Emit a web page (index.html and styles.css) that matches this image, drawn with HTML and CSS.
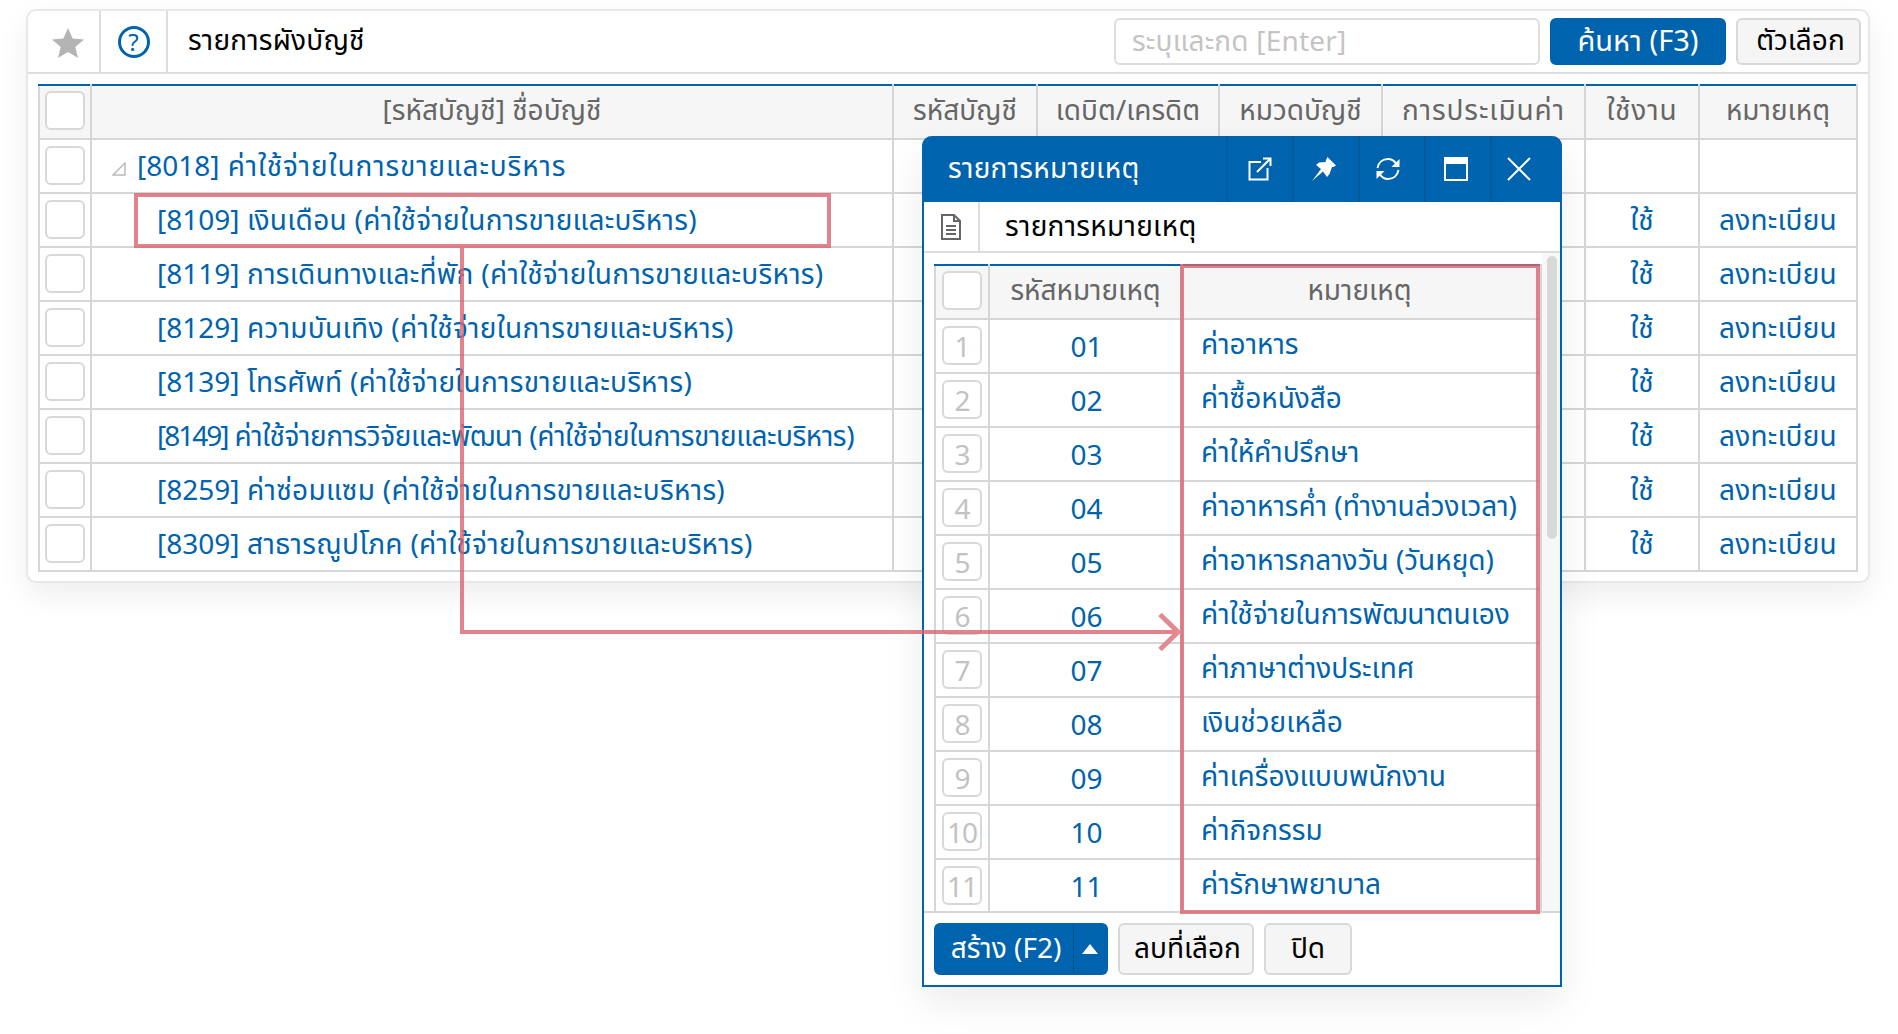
FILE: index.html
```html
<!DOCTYPE html>
<html lang="th">
<head>
<meta charset="utf-8">
<title>รายการผังบัญชี</title>
<link rel="stylesheet" href="styles.css">
</head>
<body>
<main class="panel">
  <header class="bar">
    <div class="bar-cell star-cell">
      <svg class="star" viewBox="0 0 32 30"><path d="M16 0l4.600 10.600L32 11.500l-8.700 7.500L26 30l-10-5.900L6 30l2.700-11L0 11.500l11.400-.9z"/></svg>
    </div>
    <div class="bar-cell help-cell"><span class="help">?</span></div>
    <h1 class="bar-title">รายการผังบัญชี</h1>
    <div class="search-box">ระบุและกด [Enter]</div>
    <button class="btn primary search-btn">ค้นหา (F3)</button>
    <button class="btn option-btn">ตัวเลือก</button>
  </header>
  <table class="grid main-grid">
    <colgroup><col class="c0"><col class="c1"><col class="c2"><col class="c3"><col class="c4"><col class="c5"><col class="c6"><col class="c7"></colgroup>
    <thead>
      <tr><th><span class="check"></span></th><th>[รหัสบัญชี] ชื่อบัญชี</th><th>รหัสบัญชี</th><th>เดบิต/เครดิต</th><th>หมวดบัญชี</th><th class="wide">การประเมินค่า</th><th class="wide">ใช้งาน</th><th>หมายเหตุ</th></tr>
    </thead>
    <tbody>
      <tr><td><span class="check"></span></td><td class="name parent"><svg class="tree" viewBox="0 0 14 14"><path d="M13 1v12H1z" fill="none" stroke="#bbb" stroke-width="1.500"/></svg><span class="id">[8018]</span> ค่าใช้จ่ายในการขายและบริหาร</td><td></td><td></td><td></td><td></td><td></td><td></td></tr>
      <tr><td><span class="check"></span></td><td class="name child"><span class="id">[8109]</span> เงินเดือน (ค่าใช้จ่ายในการขายและบริหาร)</td><td></td><td></td><td></td><td></td><td class="mid">ใช้</td><td class="mid">ลงทะเบียน</td></tr>
      <tr><td><span class="check"></span></td><td class="name child"><span class="id">[8119]</span> การเดินทางและที่พัก (ค่าใช้จ่ายในการขายและบริหาร)</td><td></td><td></td><td></td><td></td><td class="mid">ใช้</td><td class="mid">ลงทะเบียน</td></tr>
      <tr><td><span class="check"></span></td><td class="name child"><span class="id">[8129]</span> ความบันเทิง (ค่าใช้จ่ายในการขายและบริหาร)</td><td></td><td></td><td></td><td></td><td class="mid">ใช้</td><td class="mid">ลงทะเบียน</td></tr>
      <tr><td><span class="check"></span></td><td class="name child"><span class="id">[8139]</span> โทรศัพท์ (ค่าใช้จ่ายในการขายและบริหาร)</td><td></td><td></td><td></td><td></td><td class="mid">ใช้</td><td class="mid">ลงทะเบียน</td></tr>
      <tr><td><span class="check"></span></td><td class="name child tight"><span class="id">[8149]</span> ค่าใช้จ่ายการวิจัยและพัฒนา (ค่าใช้จ่ายในการขายและบริหาร)</td><td></td><td></td><td></td><td></td><td class="mid">ใช้</td><td class="mid">ลงทะเบียน</td></tr>
      <tr><td><span class="check"></span></td><td class="name child"><span class="id">[8259]</span> ค่าซ่อมแซม (ค่าใช้จ่ายในการขายและบริหาร)</td><td></td><td></td><td></td><td></td><td class="mid">ใช้</td><td class="mid">ลงทะเบียน</td></tr>
      <tr><td><span class="check"></span></td><td class="name child"><span class="id">[8309]</span> สาธารณูปโภค (ค่าใช้จ่ายในการขายและบริหาร)</td><td></td><td></td><td></td><td></td><td class="mid">ใช้</td><td class="mid">ลงทะเบียน</td></tr>
    </tbody>
  </table>
</main>

<section class="modal">
  <header class="modal-head">
    <h2 class="modal-title">รายการหมายเหตุ</h2>
    <div class="tool"><svg viewBox="0 0 24 24"><path d="M13 5H1.500v17.500h18V11M9 15L22.500 1.500M15 1.500h7.500V9"/></svg></div>
    <div class="tool tool-pin"><svg viewBox="0 0 24 24"><path class="fill" d="M15.500 0L24 8.500 21.500 10H20l-2.500 7L15 20l-4-5.500L0 24l9-12-5-4 3-2.500L13.500 5l.5-2z"/></svg></div>
    <div class="tool tool-sync"><svg viewBox="0 0 24 24"><path d="M1.500 11C2.500 5.500 6.500 2 12 2c3.500 0 6 1.500 8 4.500M22.500 13c-1 5.500-5 9-10.500 9-3.500 0-6-1.500-8-4.500"/><path class="fill" d="M23.500 2v8h-8zM.5 22v-8h8z"/></svg></div>
    <div class="tool tool-max"><svg viewBox="0 0 24 24"><path d="M1 1h22v22H1z"/><path class="fill" d="M1 1h22v6H1z"/></svg></div>
    <div class="tool tool-last"><svg viewBox="0 0 24 24"><path d="M1 1l22 22M23 1L1 23"/></svg></div>
  </header>
  <div class="modal-sub">
    <div class="doc-cell"><svg class="doc" viewBox="0 0 20 26"><path d="M1 1h12l6 6v18H1z M13 1v6h6 M5 12h10M5 16h10M5 20h10" fill="none" stroke="#666" stroke-width="2"/></svg></div>
    <h3 class="sub-title">รายการหมายเหตุ</h3>
  </div>
  <div class="modal-body">
    <table class="grid note-grid">
      <colgroup><col class="n0"><col class="n1"><col class="n2"></colgroup>
      <thead><tr><th><span class="check"></span></th><th>รหัสหมายเหตุ</th><th class="note-head">หมายเหตุ</th></tr></thead>
      <tbody>
        <tr><td><span class="check">1</span></td><td class="code">01</td><td class="note">ค่าอาหาร</td></tr>
        <tr><td><span class="check">2</span></td><td class="code">02</td><td class="note">ค่าซื้อหนังสือ</td></tr>
        <tr><td><span class="check">3</span></td><td class="code">03</td><td class="note">ค่าให้คำปรึกษา</td></tr>
        <tr><td><span class="check">4</span></td><td class="code">04</td><td class="note">ค่าอาหารค่ำ (ทำงานล่วงเวลา)</td></tr>
        <tr><td><span class="check">5</span></td><td class="code">05</td><td class="note">ค่าอาหารกลางวัน (วันหยุด)</td></tr>
        <tr><td><span class="check">6</span></td><td class="code">06</td><td class="note">ค่าใช้จ่ายในการพัฒนาตนเอง</td></tr>
        <tr><td><span class="check">7</span></td><td class="code">07</td><td class="note">ค่าภาษาต่างประเทศ</td></tr>
        <tr><td><span class="check">8</span></td><td class="code">08</td><td class="note">เงินช่วยเหลือ</td></tr>
        <tr><td><span class="check">9</span></td><td class="code">09</td><td class="note">ค่าเครื่องแบบพนักงาน</td></tr>
        <tr><td><span class="check">10</span></td><td class="code">10</td><td class="note">ค่ากิจกรรม</td></tr>
        <tr><td><span class="check">11</span></td><td class="code">11</td><td class="note">ค่ารักษาพยาบาล</td></tr>
      </tbody>
    </table>
    <div class="scroll"><div class="thumb"></div></div>
  </div>
  <footer class="modal-foot">
    <div class="split"><button class="btn primary split-main">สร้าง (F2)</button><button class="btn primary split-caret"><span class="caret"></span></button></div>
    <button class="btn del-btn">ลบที่เลือก</button>
    <button class="btn close-btn">ปิด</button>
  </footer>
</section>

<div class="mark mark-row"></div>
<div class="mark mark-col"></div>
<div class="mark mark-v"></div>
<div class="mark mark-h"></div>
<svg class="arrow" viewBox="0 0 24 40"><path d="M2 2.500l18 17.500L2 37.500" fill="none" stroke="#e08a92" stroke-width="5"/></svg>
</body>
</html>
```
FILE: styles.css
```css
* { box-sizing: border-box; }
html, body { margin: 0; padding: 0; }
body {
  position: relative;
  width: 1898px;
  height: 1034px;
  overflow: hidden;
  background: #fff;
  font-family: "Noto Sans", "Noto Sans Thai", "Open Sans", sans-serif;
  font-size: 28px;
  color: #000;
}
h1, h2, h3 { margin: 0; font-weight: 400; font-size: 28px; }

.panel {
  margin: 9px 28px 0 26px;
  height: 574px;
  border: 2px solid #e8e8e8;
  border-radius: 10px;
  background: #fff;
  box-shadow: 0 12px 30px rgba(0, 0, 0, .07);
  padding: 0 9px 0 10px;
}
.bar {
  display: flex;
  align-items: center;
  height: 63px;
  margin: 0 -9px 10px -10px;
  border-bottom: 2px solid #ddd;
}
.bar-cell {
  display: flex;
  align-items: center;
  justify-content: center;
  height: 100%;
  border-right: 2px solid #ddd;
}
.star-cell { width: 73px; padding: 3px 0 0 8px; }
.help-cell { width: 67px; }
.star { width: 32px; height: 30px; fill: #b4b4b4; }
.help {
  display: block;
  width: 32px;
  height: 32px;
  border: 3px solid #0063ad;
  border-radius: 50%;
  color: #0063ad;
  font-size: 24px;
  line-height: 26px;
  text-align: center;
}
.bar-title { margin-left: 20px; flex: 1; letter-spacing: .2px; }
.search-box {
  width: 426px;
  height: 47px;
  margin-right: 10px;
  padding-left: 16px;
  border: 2px solid #ddd;
  border-radius: 6px;
  color: #c4c4c4;
  line-height: 41px;
  letter-spacing: .2px;
}
.btn {
  height: 47px;
  padding: 0;
  border: 2px solid #d8d8d8;
  border-radius: 6px;
  background: #f5f5f5;
  font: inherit;
  color: #000;
}
.btn.primary { background: #0063ad; border-color: #0063ad; color: #fff; }
.search-btn { width: 176px; margin-right: 10px; font-size: 29px; }
.option-btn { width: 125px; margin-right: 7px; padding-left: 4px; }

.grid { border-collapse: collapse; table-layout: fixed; background: #fff; }
.grid th, .grid td {
  height: 54px;
  padding: 0;
  border: 2px solid #d6d6d6;
  text-align: center;
  font-weight: 400;
  overflow: hidden;
  white-space: nowrap;
}
.grid thead th { border-top: 2px solid #0063ad; background: #f6f6f6; color: #666; padding-bottom: 2px; }
.grid th.wide { letter-spacing: .9px; }
.grid td { color: #0063ad; }
.check {
  display: block;
  width: 40px;
  height: 39px;
  margin: 0 auto 2px;
  border: 2px solid #d8d8d8;
  border-radius: 6px;
  background: #fff;
  color: #c2c2c2;
  line-height: 37px;
  text-align: center;
  letter-spacing: -1px;
}
.main-grid { width: 1818px; }
.c0 { width: 52px; } .c1 { width: 802px; } .c2 { width: 144px; } .c3 { width: 182px; }
.c4 { width: 163px; } .c5 { width: 203px; } .c6 { width: 114px; } .c7 { width: 158px; }
.grid td.name { text-align: left; padding-top: 2px; }
.grid td.parent { padding-left: 20px; letter-spacing: .9px; }
.grid td.child { padding-left: 65px; letter-spacing: .3px; }
.grid td.tight { letter-spacing: -.4px; }
.grid td.mid { padding-top: 2px; letter-spacing: .2px; }
.grid td.code { padding-left: 2px; }
.id { letter-spacing: 0; }
.tight .id { letter-spacing: -2px; }
.tree { width: 14px; height: 14px; margin-right: 11px; }

.modal {
  position: absolute;
  left: 922px;
  top: 136px;
  width: 640px;
  height: 851px;
  display: flex;
  flex-direction: column;
  border: 2px solid #0063ad;
  border-top: 0;
  border-radius: 10px 10px 0 0;
  background: #fff;
  box-shadow: 0 16px 40px rgba(0, 0, 0, .08);
}
.modal-head {
  display: flex;
  height: 66px;
  margin: 0 -2px;
  background: #0063ad;
  border-radius: 10px 10px 0 0;
  color: #fff;
}
.modal-title { flex: 1; padding-left: 26px; line-height: 62px; letter-spacing: .3px; }
.tool {
  display: flex;
  align-items: center;
  justify-content: center;
  width: 66px;
  height: 100%;
  border-left: 2px solid #005a9c;
}
.tool-pin, .tool-max { padding-right: 4px; }
.tool-sync { padding-right: 8px; }
.tool-last { width: 72px; padding-right: 16px; }
.tool svg { width: 24px; height: 24px; fill: none; stroke: #fff; stroke-width: 2; }
.tool svg .fill { fill: #fff; stroke: none; }
.modal-sub { display: flex; height: 51px; border-bottom: 2px solid #ddd; }
.doc-cell { display: flex; align-items: center; justify-content: center; width: 56px; border-right: 2px solid #ddd; }
.doc { width: 20px; height: 26px; }
.sub-title { padding-left: 25px; line-height: 46px; letter-spacing: .3px; }
.modal-body { position: relative; flex: 1; min-height: 0; overflow: hidden; padding: 11px 0 0 10px; border-bottom: 2px solid #d6d6d6; }
.note-grid { width: 606px; }
.n0 { width: 54px; } .n1 { width: 193px; } .n2 { width: 359px; }
.grid th.note-head { padding-right: 4px; }
.grid td.note { text-align: left; padding: 0 0 2px 18px; }
.scroll { position: absolute; right: 0; top: 0; bottom: 0; width: 18px; background: #f7f7f7; }
.thumb { margin: 3px 3px 0 5px; height: 283px; border-radius: 5px; background: #d8d8d8; }

.modal-foot { display: flex; gap: 10px; align-items: center; height: 72px; padding: 0 0 0 10px; }
.modal-foot .btn { height: 52px; }
.split { display: flex; }
.split .btn { border-radius: 6px 0 0 6px; }
.split-main { width: 139px; padding-left: 5px; }
.split .split-caret { width: 35px; padding: 0; border-radius: 0 6px 6px 0; border-left: 1px solid #00508c; display: flex; align-items: center; justify-content: center; }
.caret { width: 0; height: 0; border: 8px solid transparent; border-top: 0; border-bottom: 10px solid #fff; }
.del-btn { width: 136px; padding-left: 3px; }
.close-btn { width: 88px; }

.mark { position: absolute; border: 0 solid rgba(218, 100, 112, .8); }
.mark-row { left: 134px; top: 193px; width: 697px; height: 55px; border-width: 4px; }
.mark-col { left: 1180px; top: 264px; width: 360px; height: 650px; border-width: 4px; }
.mark-v { left: 460px; top: 248px; width: 4px; height: 386px; border-left-width: 4px; }
.mark-h { left: 464px; top: 630px; width: 714px; height: 4px; border-top-width: 4px; }
.arrow { position: absolute; left: 1158px; top: 612px; width: 24px; height: 40px; }
```
